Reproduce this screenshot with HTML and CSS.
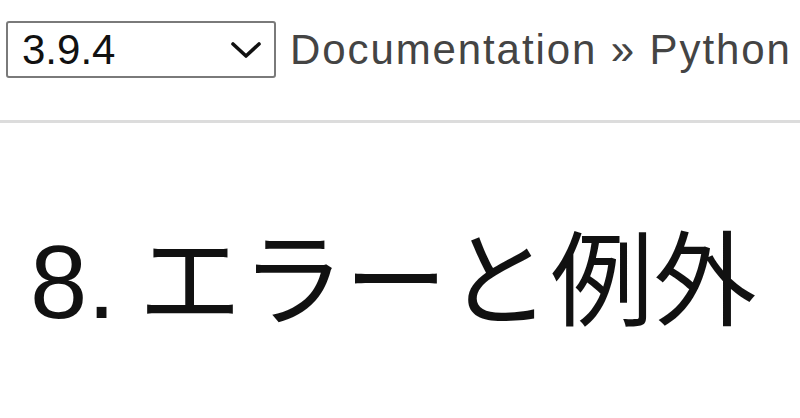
FILE: index.html
```html
<!DOCTYPE html>
<html lang="ja">
<head>
<meta charset="utf-8">
<link rel="stylesheet" href="styles.css">
</head>
<body>
<div class="related">
  <div class="version-select">
    <span class="version-value">3.9.4</span>
    <svg class="chevron" width="32" height="18" viewBox="0 0 32 18"><path d="M3 3 L16 15 L29 3" fill="none" stroke="#111" stroke-width="3.6" stroke-linecap="round" stroke-linejoin="round"/></svg>
  </div>
  <span class="crumbs">Documentation » Python</span>
</div>
<div class="body">
  <h1 class="title">8. エラーと例外</h1>
</div>
</body>
</html>
```
FILE: styles.css
```css
html, body {
  margin: 0;
  padding: 0;
  background: #fff;
  overflow: hidden;
}
.related {
  display: flex;
  align-items: flex-start;
  gap: 14px;
  padding: 21px 0 0 6px;
  height: 123px;
  box-sizing: border-box;
  border-bottom: 3px solid #dcdcdc;
  white-space: nowrap;
  font-family: "Liberation Sans", Arial, sans-serif;
}
.version-select {
  display: flex;
  align-items: center;
  justify-content: space-between;
  width: 270px;
  height: 57px;
  box-sizing: border-box;
  border: 2px solid #7a7a7a;
  border-radius: 3px;
  padding: 0 12px 0 14px;
  flex: none;
}
.version-value {
  font-size: 42px;
  color: #111;
  line-height: 1;
}
.chevron {
  display: block;
}
.crumbs {
  font-size: 42px;
  letter-spacing: 1.9px;
  color: #444;
  line-height: 57px;
}
.body {
  padding: 0 0 0 30px;
}
.title {
  margin: 0;
  padding-top: 98px;
  font-family: "Liberation Sans", "Noto Sans CJK JP", sans-serif;
  font-weight: normal;
  font-size: 103px;
  line-height: 1.2;
  word-spacing: -6px;
  color: #111;
  white-space: nowrap;
}
```
